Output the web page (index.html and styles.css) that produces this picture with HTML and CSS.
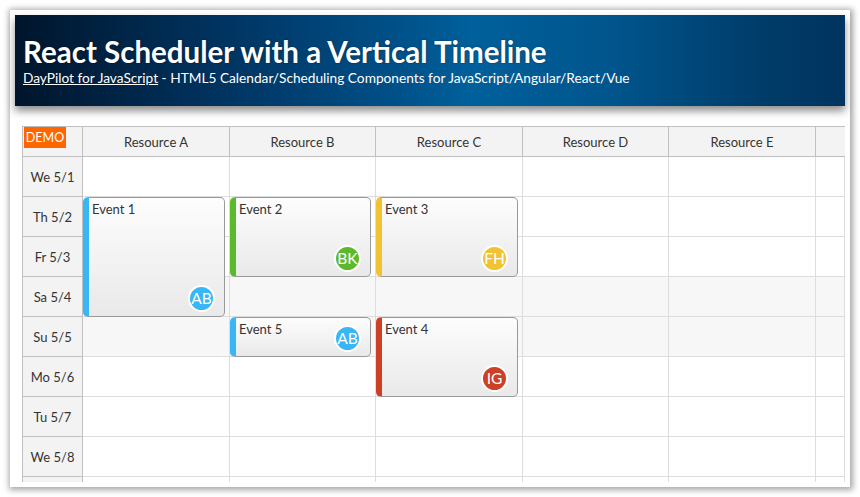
FILE: index.html
```html
<!DOCTYPE html>
<html>
<head>
<meta charset="utf-8">
<link rel="stylesheet" href="styles.css">
</head>
<body>
<div class="frame">
  <header class="header">
    <h1 class="title">React Scheduler with a Vertical Timeline</h1>
    <div class="subtitle"><a class="link" href="#">DayPilot for JavaScript</a> - HTML5 Calendar/Scheduling Components for JavaScript/Angular/React/Vue</div>
  </header>
  <main class="main">
    <div class="board">
      <div class="sched">
        <div class="corner"><span class="demo">DEMO</span></div>
        <div class="colh">Resource A</div>
        <div class="colh">Resource B</div>
        <div class="colh">Resource C</div>
        <div class="colh">Resource D</div>
        <div class="colh">Resource E</div>
        <div class="colh last"></div>

        <div class="rowh">We 5/1</div><div class="cell"></div><div class="cell"></div><div class="cell"></div><div class="cell"></div><div class="cell"></div><div class="cell"></div>
        <div class="rowh">Th 5/2</div><div class="cell"></div><div class="cell"></div><div class="cell"></div><div class="cell"></div><div class="cell"></div><div class="cell"></div>
        <div class="rowh">Fr 5/3</div><div class="cell"></div><div class="cell"></div><div class="cell"></div><div class="cell"></div><div class="cell"></div><div class="cell"></div>
        <div class="rowh">Sa 5/4</div><div class="cell we"></div><div class="cell we"></div><div class="cell we"></div><div class="cell we"></div><div class="cell we"></div><div class="cell we"></div>
        <div class="rowh">Su 5/5</div><div class="cell we"></div><div class="cell we"></div><div class="cell we"></div><div class="cell we"></div><div class="cell we"></div><div class="cell we"></div>
        <div class="rowh">Mo 5/6</div><div class="cell"></div><div class="cell"></div><div class="cell"></div><div class="cell"></div><div class="cell"></div><div class="cell"></div>
        <div class="rowh">Tu 5/7</div><div class="cell"></div><div class="cell"></div><div class="cell"></div><div class="cell"></div><div class="cell"></div><div class="cell"></div>
        <div class="rowh">We 5/8</div><div class="cell"></div><div class="cell"></div><div class="cell"></div><div class="cell"></div><div class="cell"></div><div class="cell"></div>
        <div class="rowh"></div><div class="cell"></div><div class="cell"></div><div class="cell"></div><div class="cell"></div><div class="cell"></div><div class="cell"></div>
      </div>
      <div class="events">
        <div class="event ev1 blue"><span class="etext">Event 1</span><span class="avatar">AB</span></div>
        <div class="event ev2 green"><span class="etext">Event 2</span><span class="avatar">BK</span></div>
        <div class="event ev3 yellow"><span class="etext">Event 3</span><span class="avatar">FH</span></div>
        <div class="event ev4 red"><span class="etext">Event 4</span><span class="avatar">IG</span></div>
        <div class="event ev5 blue"><span class="etext">Event 5</span><span class="avatar">AB</span></div>
      </div>
    </div>
  </main>
</div>
</body>
</html>
```

FILE: styles.css
```css
* { box-sizing: border-box; }
html, body { margin: 0; padding: 0; background: #fff; }
body {
  font-family: "Lato", "Open Sans", sans-serif;
  color: #333;
  width: 860px;
  height: 497px;
  overflow: hidden;
}
.frame {
  margin: 10px 0 0 10px;
  width: 840px;
  height: 477px;
  padding: 5px;
  background: #fff;
  box-shadow: 1px 1px 6px 2px rgba(0,0,0,0.35);
}
.header {
  height: 91px;
  padding: 20px 8px 0 8px;
  color: #fff;
  background: linear-gradient(to right, #00152b 0%, #003461 25%, #004f87 45%, #00609b 55%, #00558c 72%, #003c69 90%, #003460 100%);
  box-shadow: 0 5px 8px rgba(0,0,0,0.45);
  position: relative;
  z-index: 2;
}
.title {
  margin: 0;
  font-size: 29.5px;
  font-weight: 700;
  line-height: 34px;
  text-shadow: 0 0 2px rgba(0,0,0,0.5);
}
.subtitle {
  font-size: 13.7px;
  line-height: 18px;
  margin-top: 0;
}
.link { color: #fff; text-decoration: underline; }
.main {
  padding: 20px 0 0 7px;
}
.board {
  display: grid;
  height: 356px;
  overflow: hidden;
  border-left: 1px solid #c0c0c0;
  border-top: 1px solid #c0c0c0;
}
.sched, .events {
  grid-area: 1 / 1;
  display: grid;
  grid-template-columns: 60px 147px 146px 147px 146px 147px 1fr;
  grid-template-rows: 30px repeat(9, 40px);
  font-size: 13px;
}
.corner, .colh, .rowh {
  background: #f3f3f3;
  border-right: 1px solid #c0c0c0;
  border-bottom: 1px solid #c0c0c0;
}
.corner { padding: 0 0 0 1px; }
.demo {
  display: inline-block;
  background: #ff6600;
  color: #fff;
  font-size: 12.5px;
  line-height: 21px;
  width: 42px;
  text-align: center;
}
.colh {
  display: flex;
  align-items: center;
  justify-content: center;
}
.colh.last { border-right: none; }
.rowh {
  display: flex;
  align-items: center;
  justify-content: center;
}
.cell {
  background: #fff;
  border-right: 1px solid #ddd;
  border-bottom: 1px solid #ddd;
}
.cell.we { background: #f7f7f7; }
.event {
  position: relative;
  margin: 0 5px 0 0;
  border: 1px solid #999;
  border-left: 6px solid #38b6f5;
  border-radius: 5px;
  background: linear-gradient(to bottom, #fdfdfd 0%, #e9e9e9 100%);
  padding: 3px 0 0 3px;
  color: #333;
}
.etext { font-size: 13px; line-height: 16px; }
.ev1 { grid-column: 2; grid-row: 3 / span 3; }
.ev2 { grid-column: 3; grid-row: 3 / span 2; }
.ev3 { grid-column: 4; grid-row: 3 / span 2; }
.ev4 { grid-column: 4; grid-row: 6 / span 2; }
.ev5 { grid-column: 3; grid-row: 6 / span 1; }
.blue { border-left-color: #38b6f5; }
.green { border-left-color: #5bba2c; }
.yellow { border-left-color: #f1c232; }
.red { border-left-color: #cc4125; }
.avatar {
  position: absolute;
  right: 9px;
  bottom: 4px;
  width: 27px;
  height: 27px;
  border-radius: 50%;
  border: 2px solid #fff;
  color: #fff;
  font-size: 15.5px;
  line-height: 23px;
  text-align: center;
}
.blue .avatar { background: #38b6f5; }
.green .avatar { background: #5bba2c; }
.yellow .avatar { background: #f1c232; }
.red .avatar { background: #cc4125; }
```
